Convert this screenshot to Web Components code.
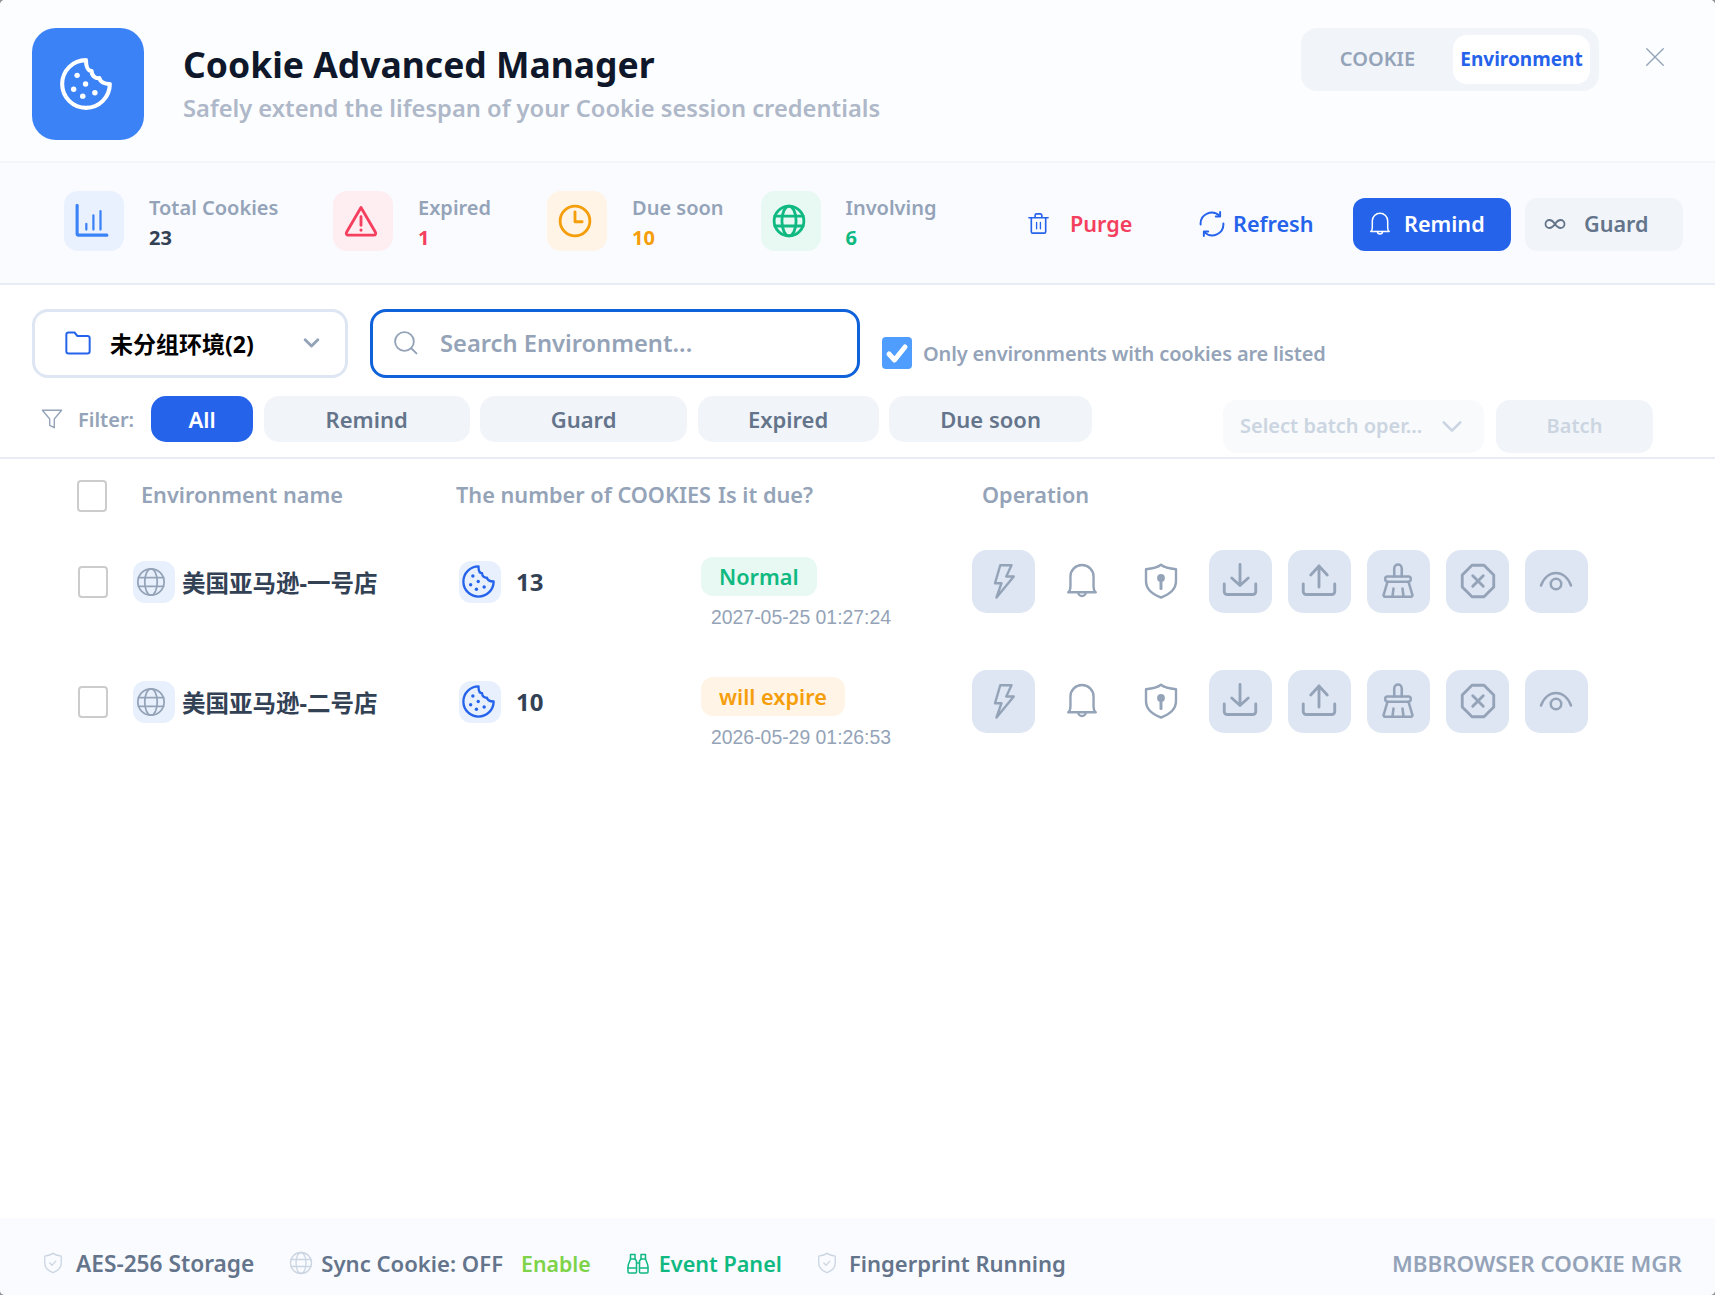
<!DOCTYPE html>
<html lang="en">
<head>
<meta charset="utf-8">
<title>Cookie Advanced Manager</title>
<style>
    html, body { margin: 0; height: 100%; background: #8f949b; }
    body { font-family: "Noto Sans", "Noto Sans CJK SC", sans-serif; }
</style>
</head>
<body>
<cookie-manager></cookie-manager>

<script>
const ICONS = {
    cookie: `<path d="M12 1a11 11 0 1 0 11 11c-2.500 0-4.500-1-4.800-2.700-2 .2-3.600-1.200-3.600-3.300C12.800 6 12 3.600 12 1z"/><g fill="currentColor" stroke="none"><circle cx="7.900" cy="8" r="1.250"/><circle cx="11.800" cy="12" r="1.250"/><circle cx="6.300" cy="14.400" r="1.250"/><circle cx="16.100" cy="16" r="1.250"/><circle cx="10.500" cy="17.600" r="1.250"/></g>`,
    chart: `<path d="M1.500 1v20a1 1 0 0 0 1 1h20" stroke-width="2.200"/><path d="M8 14v4M13 8v10M18 5v13" stroke-width="1.600"/>`,
    alert: `<path d="M12 2.500 1.800 20a1.300 1.300 0 0 0 1.200 2h18a1.300 1.300 0 0 0 1.200-2z"/><path d="M12 9v6"/><circle cx="12" cy="18.400" r="1.100" fill="currentColor" stroke="none"/>`,
    clock: `<circle cx="12" cy="12" r="10.500"/><path d="M12 5.500V12.500H17"/>`,
    globe: `<circle cx="12" cy="12" r="10.500"/><ellipse cx="12" cy="12" rx="5" ry="10.500"/><path d="M2 8.500h20M2 15.500h20"/>`,
    trash: `<path d="M2 6h20M8.500 6V3.500a1.500 1.500 0 0 1 1.500-1.500h4a1.500 1.500 0 0 1 1.500 1.500V6"/><path d="M4.500 6v14.500a1.500 1.500 0 0 0 1.500 1.500h12a1.500 1.500 0 0 0 1.500-1.500V6"/><path d="M10 11v6.500M14 11v6.500" stroke-width="1.400"/>`,
    refresh: `<path d="M1.500 12.500A10.300 10.300 0 0 1 19 4.500M22.500 11.500A10.300 10.300 0 0 1 5 19.500"/><path d="M19.500 1v4h-4M4.500 23v-4h4"/>`,
    bell: `<path d="M2.800 19.500c1.500-.8 1.400-2.500 1.500-4V9a7.700 7.700 0 0 1 15.400 0v6.500c.1 1.500 0 3.200 1.500 4z"/><path d="M9.500 19.500a2.500 2.500 0 0 0 5 0"/>`,
    infinity: `<path d="M12 12C10 9 8.500 8 6.500 8a4 4 0 0 0 0 8c2 0 3.500-1 5.500-4s3.500-4 5.500-4a4 4 0 0 1 0 8c-2 0-3.500-1-5.500-4z"/>`,
    close: `<path d="M1 1l22 22M23 1 1 23"/>`,
    folder: `<path d="M2 5a2 2 0 0 1 2-2h5l2.500 3H20a2 2 0 0 1 2 2v11a2 2 0 0 1-2 2H4a2 2 0 0 1-2-2z"/>`,
    check: `<path d="M4 13l5.500 6L20 6"/>`,
    chevron: `<path d="M3 8l9 9 9-9"/>`,
    search: `<circle cx="11" cy="11" r="9"/><path d="M17.500 17.500 22.500 22.500"/>`,
    funnel: `<path d="M1.500 2.500h21L14.500 12v9.500l-5-2.500v-7z"/>`,
    bolt: `<path d="M9.500 1.500h7.500l-3.500 7.500h5L7 23l3.300-9.500H6z"/>`,
    shieldkey: `<path d="M12 1.200c2.500 2 6 2.600 10 3V12c0 5-4 8.800-10 11C6 20.800 2 17 2 12V4.200c4-.4 7.500-1 10-3z"/><circle cx="12" cy="10" r="2.600" fill="currentColor" stroke="none"/><path d="M12 11v6" stroke-width="2"/>`,
    download: `<path d="M1.500 14v5a2 2 0 0 0 2 2h17a2 2 0 0 0 2-2v-5"/><path d="M12 1v14M6.500 10l5.500 5 5.500-5"/>`,
    upload: `<path d="M1.500 14v5a2 2 0 0 0 2 2h17a2 2 0 0 0 2-2v-5"/><path d="M12 16V2M6.500 8 12 2l5.500 6"/>`,
    broom: `<path d="M9.500 9V3.500a2.500 2.500 0 0 1 5 0V9"/><path d="M5 9h14a1.500 1.500 0 0 1 1.500 1.500v.5a1.500 1.500 0 0 1-1.500 1.500H5A1.500 1.500 0 0 1 3.500 11v-.5A1.500 1.500 0 0 1 5 9z"/><path d="M5 12.500 2.500 21a1 1 0 0 0 1 1.500h17a1 1 0 0 0 1-1.500L19 12.500"/><path d="M9 17l-.7 5.500M15 17l.7 5.500"/>`,
    octagon: `<path d="M8 1.500h8L22.500 8v8L16 22.500H8L1.500 16V8z"/><path d="M8.500 8.500l7 7m0-7-7 7"/>`,
    eye: `<path d="M2 15C4 9.500 8 6.700 12 6.700s8 2.800 10 8.300"/><circle cx="12" cy="14" r="3.500"/>`,
    shieldcheck: `<path d="M12 1.500c2.500 1.800 5.500 2.500 9 3V12c0 5-3.500 8.500-9 10.500C6.500 20.500 3 17 3 12V4.500c3.500-.5 6.500-1.200 9-3z"/><path d="M8.500 12l2.500 2.500 4-4.500" stroke-width="1.300"/>`,
    binoculars: `<path d="M2 21v-5c0-3 1.500-5 2.500-8V3.500h4.500V8l1.500 2v11a1 1 0 0 1-1 1H3a1 1 0 0 1-1-1z"/><path d="M22 21v-5c0-3-1.500-5-2.500-8V3.500H15V8l-1.500 2v11a1 1 0 0 0 1 1h6.500a1 1 0 0 0 1-1z"/><path d="M10.500 12h3M2 17h8.500M13.500 17H22M4.500 8h4.500M15 8h4.500"/>`,
};

class MgrIcon extends HTMLElement {
    connectedCallback() {
        const shadow = this.shadowRoot || this.attachShadow({ mode: "open" });
        const size = this.getAttribute("size") || 24;
        const color = this.getAttribute("color") || "currentColor";
        const width = this.getAttribute("stroke") || 2;
        shadow.innerHTML = `
            <style>
                :host { display: inline-flex; flex: none; color: ${color}; }
                svg { display: block; fill: none; stroke: currentColor; stroke-linecap: round; stroke-linejoin: round; }
            </style>
            <svg width="${size}" height="${size}" viewBox="0 0 24 24" stroke-width="${width}">${ICONS[this.getAttribute("name")]}</svg>
        `;
    }
}

const headerTemplate = document.createElement("template");
headerTemplate.innerHTML = `
    <style>
        :host { display: flex; height: 133px; padding: 28px 51px 0 32px; background: #fcfdff; border-bottom: 2px solid #f2f5fa; }
        .logo { width: 112px; height: 112px; border-radius: 24px; background: #3b82f6; display: flex; align-items: center; justify-content: center; flex: none; }
        .logo mgr-icon { margin-right: 4px; }
        .titles { margin: 14px 0 0 39px; }
        h1 { margin: 0; font-size: 35.500px; line-height: 44px; font-weight: 700; color: #0f172a; white-space: nowrap; }
        p { margin: 4px 0 0; font-size: 23.700px; line-height: 36px; font-weight: 600; color: #aeb8c8; white-space: nowrap; }
        .tabs { margin-left: auto; width: 298px; height: 63px; box-sizing: border-box; border-radius: 16px; background: #f1f5f9; display: flex; padding: 7px 9px 7px 0; justify-content: flex-end; align-items: stretch; }
        .tab { display: flex; align-items: center; justify-content: center; font-size: 20px; font-weight: 600; padding-bottom: 2px; box-sizing: border-box; }
        .off { width: 151px; color: #94a3b8; }
        .on { width: 137px; background: #fff; border-radius: 14px; color: #2563eb; font-size: 19px; font-weight: 700; }
        .close { margin: 20px 0 0 47px; height: 18px; width: 18px; }
    </style>
    <div class="logo"><mgr-icon name="cookie" size="52" color="#fff" stroke="1.900"></mgr-icon></div>
    <div class="titles">
        <h1><slot name="title"></slot></h1>
        <p><slot name="subtitle"></slot></p>
    </div>
    <div class="tabs"><div class="tab off">COOKIE</div><div class="tab on">Environment</div></div>
    <div class="close"><mgr-icon name="close" size="18" color="#94a3b8" stroke="1.800"></mgr-icon></div>
`;
class MgrHeader extends HTMLElement {
    constructor() {
        super();
        this.attachShadow({ mode: "open" }).append(headerTemplate.content.cloneNode(true));
    }
}

class StatItem extends HTMLElement {
    connectedCallback() {
        const shadow = this.shadowRoot || this.attachShadow({ mode: "open" });
        const color = this.getAttribute("color");
        const bg = this.getAttribute("bg");
        shadow.innerHTML = `
            <style>
                :host { display: flex; gap: 25px; flex: none; width: ${this.getAttribute("width") || 159}px; }
                .tile { width: 60px; height: 60px; border-radius: 14px; background: ${bg}; display: flex; align-items: center; justify-content: center; flex: none; }
                .tile mgr-icon { margin-right: 4px; }
                .text { padding-top: 3px; white-space: nowrap; }
                .label { font-size: 20px; line-height: 28px; font-weight: 600; color: #94a3b8; }
                .value { margin-top: 1px; font-size: 20px; line-height: 30px; font-weight: 700; color: ${this.getAttribute("value-color") || color}; }
            </style>
            <div class="tile"><mgr-icon name="${this.getAttribute("icon")}" size="34" color="${color}" stroke="2"></mgr-icon></div>
            <div class="text">
                <div class="label"><slot></slot></div>
                <div class="value">${this.getAttribute("value")}</div>
            </div>
        `;
    }
}

class ActionButton extends HTMLElement {
    connectedCallback() {
        const shadow = this.shadowRoot || this.attachShadow({ mode: "open" });
        const color = this.getAttribute("color");
        shadow.innerHTML = `
            <style>
                :host { display: flex; align-items: center; width: 158px; height: 53px; box-sizing: border-box; padding: 0 0 2px ${this.getAttribute("pad") || 18}px; gap: ${this.getAttribute("gap")}px; border-radius: 12px; background: ${this.getAttribute("bg") || "transparent"}; font-size: 21.600px; font-weight: 600; color: ${color}; white-space: nowrap; }
            </style>
            <mgr-icon name="${this.getAttribute("icon")}" size="${this.getAttribute("size") || 24}" color="${this.getAttribute("icon-color") || color}" stroke="${this.getAttribute("stroke") || 2}"></mgr-icon>
            <slot></slot>
        `;
    }
}

const statsTemplate = document.createElement("template");
statsTemplate.innerHTML = `
    <style>
        :host { display: flex; height: 92px; padding: 28px 32px 0 64px; background: #f9fbff; border-bottom: 2px solid #e8edf5; }
        .stats { display: flex; gap: 55px; }
        .actions { display: flex; gap: 14px; margin: 7px 0 0 auto; }
    </style>
    <div class="stats"><slot name="stat"></slot></div>
    <div class="actions"><slot name="action"></slot></div>
`;
class MgrStats extends HTMLElement {
    constructor() {
        super();
        this.attachShadow({ mode: "open" }).append(statsTemplate.content.cloneNode(true));
    }
}

class FilterPill extends HTMLElement {
    connectedCallback() {
        const shadow = this.shadowRoot || this.attachShadow({ mode: "open" });
        const active = this.hasAttribute("active");
        shadow.innerHTML = `
            <style>
                :host { display: flex; align-items: center; justify-content: center; flex: none; width: ${this.getAttribute("width")}px; height: 46px; border-radius: 15px; background: ${active ? "#2563eb" : "#f1f5f9"}; color: ${active ? "#fff" : "#64748b"}; font-size: 22px; font-weight: 600; }
            </style>
            <slot></slot>
        `;
    }
}

const toolbarTemplate = document.createElement("template");
toolbarTemplate.innerHTML = `
    <style>
        :host { display: block; padding: 24px 62px 4px 32px; border-bottom: 2px solid #e8edf5; background: #fff; }
        .top { display: flex; gap: 22px; align-items: flex-start; }
        .group, .search { height: 69px; box-sizing: border-box; border-radius: 16px; background: #fff; display: flex; align-items: center; flex: none; padding-bottom: 2px; }
        .group { width: 316px; border: 3px solid #dde6f2; padding-left: 29px; color: #000; font-size: 23px; font-weight: 700; }
        .group span { margin-left: 18px; white-space: nowrap; }
        .group mgr-icon:last-child { margin-left: auto; margin-right: 25px; }
        .search { width: 490px; border: 3px solid #0f62d9; padding-left: 20px; gap: 22px; color: #94a3b8; font-size: 23.700px; font-weight: 600; }
        .only { display: flex; align-items: center; gap: 11px; margin-top: 28px; font-size: 20px; letter-spacing: -.16px; font-weight: 600; color: #94a3b8; white-space: nowrap; }
        .box { width: 30px; height: 32px; border-radius: 4px; background: #4f9dff; display: flex; align-items: center; justify-content: center; }
        .filters { display: flex; align-items: flex-start; margin-top: 18px; height: 57px; }
        .label { display: flex; align-items: center; height: 46px; margin: 0 17px 0 9px; gap: 15px; font-size: 20px; font-weight: 600; color: #94a3b8; }
        .pills { display: flex; gap: 10.500px; }
        .batch { margin-left: auto; display: flex; gap: 12px; margin-top: 4px; }
        .batch div { height: 53px; box-sizing: border-box; border-radius: 14px; display: flex; align-items: center; font-size: 20px; font-weight: 600; color: #cbd5e1; padding-bottom: 2px; }
        .pick { width: 261px; background: #f8fafc; padding: 0 21px 0 17px; justify-content: space-between; white-space: nowrap; }
        .go { width: 157px; background: #f1f5f9; justify-content: center; }
    </style>
    <div class="top">
        <div class="group"><mgr-icon name="folder" size="28" color="#2563eb" stroke="1.700"></mgr-icon><span>未分组环境(2)</span><mgr-icon name="chevron" size="17" color="#94a3b8" stroke="4"></mgr-icon></div>
        <div class="search"><mgr-icon name="search" size="25" color="#94a3b8" stroke="1.800"></mgr-icon><span>Search Environment...</span></div>
        <div class="only"><div class="box"><mgr-icon name="check" size="24" color="#fff" stroke="5"></mgr-icon></div>Only environments with cookies are listed</div>
    </div>
    <div class="filters">
        <div class="label"><mgr-icon name="funnel" size="22" color="#94a3b8" stroke="1.500"></mgr-icon>Filter:</div>
        <div class="pills"><slot></slot></div>
        <div class="batch">
            <div class="pick">Select batch oper...<mgr-icon name="chevron" size="22" color="#cbd5e1" stroke="2.800"></mgr-icon></div>
            <div class="go">Batch</div>
        </div>
    </div>
`;
class MgrToolbar extends HTMLElement {
    constructor() {
        super();
        this.attachShadow({ mode: "open" }).append(toolbarTemplate.content.cloneNode(true));
    }
}

const GRID = "grid-template-columns: 55px 326px 243px 270px 1fr; padding-left: 78px;";

const tableHeadTemplate = document.createElement("template");
tableHeadTemplate.innerHTML = `
    <style>
        :host { display: grid; ${GRID} height: 53px; padding-top: 9px; align-items: center; font-size: 21.700px; font-weight: 600; color: #94a3b8; white-space: nowrap; }
        .box { width: 26px; height: 28px; border: 2px solid #cccccc; border-radius: 4px; background: #fff; margin: 2px 0 0 -1px; }
        .name { margin-left: 8px; }
        .count { margin-left: -3px; }
        .due { margin-left: 16px; }
        .ops { margin-left: 10px; }
    </style>
    <div class="box"></div>
    <div class="name">Environment name</div>
    <div class="count">The number of COOKIES</div>
    <div class="due">Is it due?</div>
    <div class="ops">Operation</div>
`;
class TableHead extends HTMLElement {
    constructor() {
        super();
        this.attachShadow({ mode: "open" }).append(tableHeadTemplate.content.cloneNode(true));
    }
}

class OpButton extends HTMLElement {
    connectedCallback() {
        const shadow = this.shadowRoot || this.attachShadow({ mode: "open" });
        const plain = this.hasAttribute("plain");
        const shift = this.getAttribute("shift") || 2;
        shadow.innerHTML = `
            <style>
                :host { display: flex; align-items: center; justify-content: center; width: 63px; height: 63px; border-radius: 15px; background: ${plain ? "transparent" : "#dde6f2"}; }
                mgr-icon { margin-right: ${shift}px; }
            </style>
            <mgr-icon name="${this.getAttribute("icon")}" size="36" color="#94a3b8" stroke="${this.getAttribute("stroke") || 1.900}"></mgr-icon>
        `;
    }
}

class EnvRow extends HTMLElement {
    connectedCallback() {
        const shadow = this.shadowRoot || this.attachShadow({ mode: "open" });
        shadow.innerHTML = `
            <style>
                :host { display: grid; ${GRID} height: 120px; align-items: center; }
                .box { width: 26px; height: 28px; border: 2px solid #cccccc; border-radius: 4px; background: #fff; margin-top: 1px; }
                .env, .count { display: flex; align-items: center; margin-top: 1px; }
                .tile { width: 42px; height: 42px; border-radius: 12px; background: #e8f0fe; display: flex; align-items: center; justify-content: center; flex: none; }
                .env .tile mgr-icon { margin-right: 7px; }
                .count .tile mgr-icon { margin-right: 4px; }
                .name { margin-left: 7px; font-size: 23.500px; font-weight: 700; color: #334155; white-space: nowrap; }
                .num { margin-left: 15px; font-size: 24px; font-weight: 700; color: #334155; }
                .status { align-self: start; padding-top: 36px; margin-left: -1px; }
                .badge { display: inline-flex; align-items: center; height: 39px; padding: 0 18px; border-radius: 12px; font-size: 21.700px; font-weight: 600; color: ${this.getAttribute("status-color")}; background: ${this.getAttribute("status-bg")}; }
                .date { margin: 9px 0 0 10px; font: 19.400px/24px "Liberation Sans", Arial, sans-serif; color: #94a3b8; white-space: nowrap; }
                .ops { display: flex; gap: 16px; }
            </style>
            <div class="box"></div>
            <div class="env"><div class="tile"><mgr-icon name="globe" size="30" color="#94a3b8" stroke="1.400"></mgr-icon></div><div class="name"><slot></slot></div></div>
            <div class="count"><div class="tile"><mgr-icon name="cookie" size="33" color="#2563eb" stroke="1.700"></mgr-icon></div><div class="num">${this.getAttribute("count")}</div></div>
            <div class="status"><div class="badge">${this.getAttribute("status")}</div><div class="date">${this.getAttribute("date")}</div></div>
            <div class="ops">
                <op-button icon="bolt" stroke="1.600" shift="0"></op-button>
                <op-button icon="bell" plain stroke="1.600"></op-button>
                <op-button icon="shieldkey" plain stroke="1.600"></op-button>
                <op-button icon="download"></op-button>
                <op-button icon="upload"></op-button>
                <op-button icon="broom" stroke="1.700"></op-button>
                <op-button icon="octagon" shift="0"></op-button>
                <op-button icon="eye" stroke="1.700"></op-button>
            </div>
        `;
    }
}

const footerTemplate = document.createElement("template");
footerTemplate.innerHTML = `
    <style>
        :host { display: flex; align-items: center; height: 64px; padding: 13px 33px 0 42px; background: #f9fbff; font-size: 22px; font-weight: 600; color: #64748b; white-space: nowrap; }
        .item { display: flex; align-items: center; }
        .green { color: #10b981; font-size: 21.600px; }
        .lime { color: #7ed348; margin-left: 18px; font-size: 21.300px; }
        .brand { margin-left: auto; color: #94a3b8; font-size: 22.400px; }
    </style>
    <div class="item" style="gap: 12px; font-size: 22.700px"><mgr-icon name="shieldcheck" size="22" color="#cbd5e1" stroke="1.400"></mgr-icon>AES-256 Storage</div>
    <div class="item" style="gap: 8px; margin-left: 35px; font-size: 22.100px"><mgr-icon name="globe" size="24" color="#cbd5e1" stroke="1.300"></mgr-icon>Sync Cookie: OFF</div>
    <div class="lime">Enable</div>
    <div class="item green" style="gap: 9px; margin-left: 35px"><mgr-icon name="binoculars" size="24" color="#10b981" stroke="1.500"></mgr-icon>Event Panel</div>
    <div class="item" style="gap: 11px; margin-left: 34px"><mgr-icon name="shieldcheck" size="22" color="#cbd5e1" stroke="1.400"></mgr-icon>Fingerprint Running</div>
    <div class="brand">MBBROWSER COOKIE MGR</div>
`;
class MgrFooter extends HTMLElement {
    constructor() {
        super();
        this.attachShadow({ mode: "open" }).append(footerTemplate.content.cloneNode(true));
    }
}

const appTemplate = document.createElement("template");
appTemplate.innerHTML = `
    <style>
        :host { display: flex; flex-direction: column; height: 1295px; background: #fff; border-radius: 5px; overflow: hidden; }
        .table { flex: 1; min-height: 0; }
    </style>
    <mgr-header>
        <span slot="title">Cookie Advanced Manager</span>
        <span slot="subtitle">Safely extend the lifespan of your Cookie session credentials</span>
    </mgr-header>
    <mgr-stats>
        <stat-item slot="stat" width="214" icon="chart" color="#3b82f6" bg="#eaf1fe" value="23" value-color="#334155">Total Cookies</stat-item>
        <stat-item slot="stat" icon="alert" color="#f43f5e" bg="#ffeef1" value="1">Expired</stat-item>
        <stat-item slot="stat" width="158.500" icon="clock" color="#f59e0b" bg="#fff4e6" value="10">Due soon</stat-item>
        <stat-item slot="stat" icon="globe" color="#10b981" bg="#e7f9f2" value="6">Involving</stat-item>
        <action-button slot="action" icon="trash" color="#f43f5e" icon-color="#2563eb" gap="20" size="23" stroke="1.700">Purge</action-button>
        <action-button slot="action" icon="refresh" color="#2563eb" gap="8" size="26" stroke="1.800">Refresh</action-button>
        <action-button slot="action" icon="bell" color="#fff" bg="#2563eb" gap="12" size="24" pad="15" stroke="1.500">Remind</action-button>
        <action-button slot="action" icon="infinity" color="#64748b" bg="#f1f5f9" gap="17" size="24" stroke="1.800">Guard</action-button>
    </mgr-stats>
    <mgr-toolbar>
        <filter-pill active width="102">All</filter-pill>
        <filter-pill width="206">Remind</filter-pill>
        <filter-pill width="207">Guard</filter-pill>
        <filter-pill width="181">Expired</filter-pill>
        <filter-pill width="203">Due soon</filter-pill>
    </mgr-toolbar>
    <div class="table">
        <table-head></table-head>
        <env-row count="13" status="Normal" status-color="#10b981" status-bg="#e7f9f2" date="2027-05-25 01:27:24">美国亚马逊-一号店</env-row>
        <env-row count="10" status="will expire" status-color="#f59e0b" status-bg="#fff4e6" date="2026-05-29 01:26:53">美国亚马逊-二号店</env-row>
    </div>
    <mgr-footer></mgr-footer>
`;
class CookieManager extends HTMLElement {
    constructor() {
        super();
        this.attachShadow({ mode: "open" }).append(appTemplate.content.cloneNode(true));
    }
}

customElements.define("mgr-icon", MgrIcon);
customElements.define("mgr-header", MgrHeader);
customElements.define("stat-item", StatItem);
customElements.define("action-button", ActionButton);
customElements.define("mgr-stats", MgrStats);
customElements.define("filter-pill", FilterPill);
customElements.define("mgr-toolbar", MgrToolbar);
customElements.define("table-head", TableHead);
customElements.define("op-button", OpButton);
customElements.define("env-row", EnvRow);
customElements.define("mgr-footer", MgrFooter);
customElements.define("cookie-manager", CookieManager);
</script>
</body>
</html>
